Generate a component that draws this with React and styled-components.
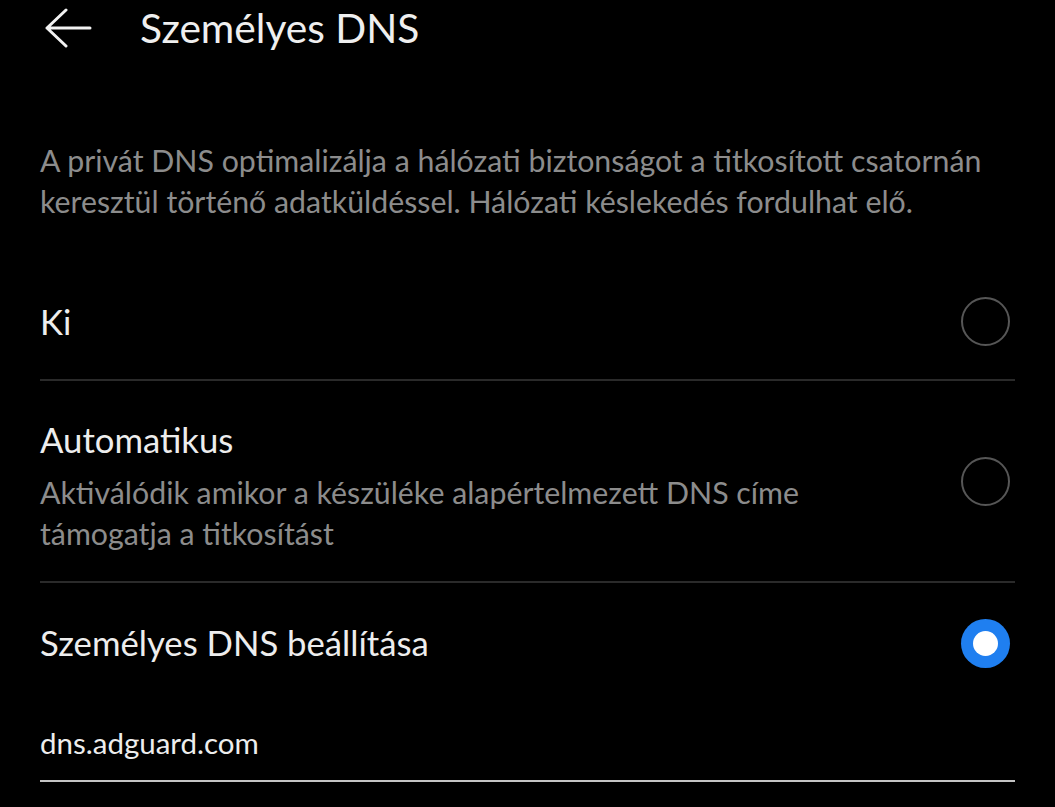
import React from "react";
import styled, { createGlobalStyle } from "styled-components";

const Global = createGlobalStyle`
  html, body { margin: 0; padding: 0; background: #000; }
  body { font-family: Lato, "Open Sans", sans-serif; }
`;

const Page = styled.div`
  width: 1055px;
  height: 807px;
  background: #000;
  color: #ececec;
  overflow: hidden;
  box-sizing: border-box;
`;

const Header = styled.div`
  display: flex;
  align-items: center;
  height: 56px;
  padding-left: 44px;
  gap: 48px;
`;

const BackIcon = styled.svg`
  width: 48px;
  height: 40px;
  display: block;
`;

const Title = styled.h1`
  margin: 0;
  font-size: 40.7px;
  font-weight: 400;
  color: #efefef;
  line-height: 50px;
`;

const Content = styled.div`
  padding: 0 40px;
`;

const Description = styled.p`
  margin: 84px 0 42px;
  font-size: 30.3px;
  line-height: 41px;
  color: #8c8c8c;
  white-space: nowrap;
`;

const Row = styled.div`
  display: flex;
  align-items: center;
  justify-content: space-between;
  height: ${(p) => p.$h}px;
  border-bottom: ${(p) => (p.$divider ? "2px solid #2a2a2a" : "none")};
  box-sizing: border-box;
`;

const RowText = styled.div`
  display: flex;
  flex-direction: column;
  padding-top: 12px;
`;

const Label = styled.div`
  font-size: 34.7px;
  color: #ededed;
  line-height: 40px;
  white-space: nowrap;
`;

const Sub = styled.div`
  margin-top: 12px;
  font-size: 30.3px;
  line-height: 41px;
  color: #8c8c8c;
  white-space: nowrap;
`;

const Radio = styled.div`
  width: 49px;
  height: 49px;
  border-radius: 50%;
  box-sizing: border-box;
  margin-right: 5px;
  flex: none;
  display: flex;
  align-items: center;
  justify-content: center;
  border: ${(p) => (p.$checked ? "none" : "2px solid #565656")};
  background: ${(p) => (p.$checked ? "#1f7ff0" : "transparent")};
  &::after {
    content: "";
    display: ${(p) => (p.$checked ? "block" : "none")};
    width: 25px;
    height: 25px;
    border-radius: 50%;
    background: #fff;
  }
`;

const Input = styled.div`
  font-size: 29.5px;
  line-height: 40px;
  color: #ededed;
  padding-top: 20px;
  padding-bottom: 17px;
  border-bottom: 2px solid #c4c4c4;
`;

export default function App() {
  return (
    <Page>
      <Global />
      <Header>
        <BackIcon viewBox="0 0 48 40">
          <path d="M46 20H3M22 2L3 20l19 18" fill="none" stroke="#f2f2f2" strokeWidth="3" strokeLinecap="round" strokeLinejoin="round" />
        </BackIcon>
        <Title>Személyes DNS</Title>
      </Header>
      <Content>
        <Description>
          A privát DNS optimalizálja a hálózati biztonságot a titkosított csatornán
          <br />
          keresztül történő adatküldéssel. Hálózati késlekedés fordulhat elő.
        </Description>
        <Row $h={117} $divider>
          <Label>Ki</Label>
          <Radio />
        </Row>
        <Row $h={202} $divider>
          <RowText>
            <Label>Automatikus</Label>
            <Sub>
              Aktiválódik amikor a készüléke alapértelmezett DNS címe
              <br />
              támogatja a titkosítást
            </Sub>
          </RowText>
          <Radio />
        </Row>
        <Row $h={120}>
          <Label>Személyes DNS beállítása</Label>
          <Radio $checked />
        </Row>
        <Input>dns.adguard.com</Input>
      </Content>
    </Page>
  );
}
